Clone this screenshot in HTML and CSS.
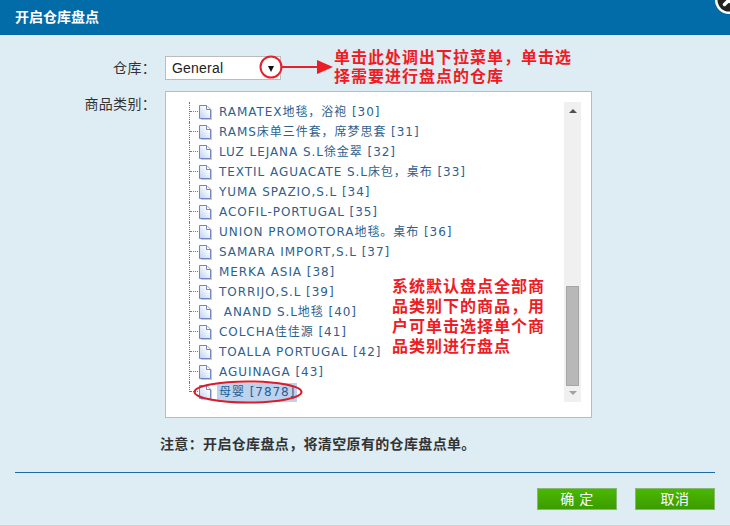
FILE: index.html
```html
<!DOCTYPE html>
<html lang="zh">
<head>
<meta charset="utf-8">
<title>开启仓库盘点</title>
<link rel="stylesheet" href="styles.css">
</head>
<body>
<svg class="defs" width="0" height="0">
  <defs>
    <linearGradient id="pg" x1="0" y1="1" x2="1" y2="0"><stop offset="0" stop-color="#b8d0f4"/><stop offset=".75" stop-color="#ffffff"/></linearGradient>
    <symbol id="doc" viewBox="0 0 14 16">
      <path d="M3 2H10L14 6V16H3Z" fill="#c8c8d0"/>
      <path d="M1.500 1.500H8.500L12.500 5.500V14.500H1.500Z" fill="url(#pg)" stroke="#7385c0"/>
      <path d="M8.500 1.500V5.500H12.500" fill="#fff" stroke="#7385c0"/>
    </symbol>
  </defs>
</svg>
<main class="dialog">
  <header class="title">开启仓库盘点</header>
  <section class="form">
    <div class="row row-select">
      <label class="label">仓库：</label>
      <div class="select"><span>General</span><i class="caret"></i></div>
    </div>
    <div class="row row-list">
      <label class="label">商品类别：</label>
      <div class="listbox">
        <ul class="tree">
          <li><svg class="doc"><use href="#doc"/></svg><span>RAMATEX地毯，浴袍 [30]</span></li>
          <li><svg class="doc"><use href="#doc"/></svg><span>RAMS床单三件套，席梦思套 [31]</span></li>
          <li><svg class="doc"><use href="#doc"/></svg><span>LUZ LEJANA S.L徐金翠 [32]</span></li>
          <li><svg class="doc"><use href="#doc"/></svg><span>TEXTIL AGUACATE S.L床包，桌布 [33]</span></li>
          <li><svg class="doc"><use href="#doc"/></svg><span>YUMA SPAZIO,S.L [34]</span></li>
          <li><svg class="doc"><use href="#doc"/></svg><span>ACOFIL-PORTUGAL [35]</span></li>
          <li><svg class="doc"><use href="#doc"/></svg><span>UNION PROMOTORA地毯。桌布 [36]</span></li>
          <li><svg class="doc"><use href="#doc"/></svg><span>SAMARA IMPORT,S.L [37]</span></li>
          <li><svg class="doc"><use href="#doc"/></svg><span>MERKA ASIA [38]</span></li>
          <li><svg class="doc"><use href="#doc"/></svg><span>TORRIJO,S.L [39]</span></li>
          <li><svg class="doc"><use href="#doc"/></svg><span class="pre"> ANAND S.L地毯 [40]</span></li>
          <li><svg class="doc"><use href="#doc"/></svg><span>COLCHA佳佳源 [41]</span></li>
          <li><svg class="doc"><use href="#doc"/></svg><span>TOALLA PORTUGAL [42]</span></li>
          <li><svg class="doc"><use href="#doc"/></svg><span>AGUINAGA [43]</span></li>
          <li class="last"><svg class="doc"><use href="#doc"/></svg><span class="selected">母婴 [7878]</span></li>
        </ul>
        <div class="scrollbar">
          <i class="arrow up"></i>
          <div class="track"><div class="thumb"></div></div>
          <i class="arrow down"></i>
        </div>
      </div>
    </div>
    <p class="note">注意：开启仓库盘点，将清空原有的仓库盘点单。</p>
  </section>
  <footer class="footer">
    <button class="btn">确 定</button>
    <button class="btn">取消</button>
  </footer>

  <div class="close" aria-label="关闭"><svg width="32" height="32" viewBox="0 0 32 32"><circle cx="16" cy="16" r="14" fill="#fff"/><circle cx="16" cy="16" r="11.500" fill="#222"/><path d="M11.500 11.500L20.500 20.500M20.500 11.500L11.500 20.500" stroke="#fff" stroke-width="3.500" stroke-linecap="round"/></svg></div>
  <svg class="mark-circle" width="26" height="26" viewBox="0 0 26 26"><circle cx="13" cy="13" r="10.500" fill="none" stroke="#e8202c" stroke-width="2"/></svg>
  <svg class="mark-arrow" width="52" height="16" viewBox="0 0 52 16"><path d="M0 8H36" stroke="#e8202c" stroke-width="2"/><path d="M36 1L52 8L36 15Z" fill="#ee1c25"/></svg>
  <p class="callout callout-top">单击此处调出下拉菜单，单击选<br>择需要进行盘点的仓库</p>
  <p class="callout callout-mid">系统默认盘点全部商<br>品类别下的商品，用<br>户可单击选择单个商<br>品类别进行盘点</p>
  <svg class="mark-ellipse" width="112" height="26" viewBox="0 0 112 26"><ellipse cx="56" cy="13" rx="53.500" ry="10.500" fill="none" stroke="#d81e2c" stroke-width="2"/></svg>
</main>
</body>
</html>
```

FILE: styles.css
```css
* { box-sizing: border-box; }
html, body { margin: 0; padding: 0; }
body { width: 730px; height: 526px; overflow: hidden; background: #deecf4; font-family: "Liberation Sans", "Noto Sans CJK SC", sans-serif; }
.defs { position: absolute; }
.dialog { position: relative; width: 730px; height: 526px; display: flex; flex-direction: column; border-bottom: 1px solid #d0d0d0; }
.title { height: 35px; flex: none; background: #026ca8; color: #fff; font-size: 14px; font-weight: 700; line-height: 34px; padding-left: 15px; }
.form { flex: 1; padding: 21px 0 0; display: flex; flex-direction: column; }
.row { display: flex; }
.label { width: 156px; text-align: right; font-size: 14px; color: #333; letter-spacing: .3px; line-height: 24px; margin-right: 9px; flex: none; }
.row-select { height: 24px; }
.row-list { margin-top: 11px; }
.row-list .label { line-height: 26px; }
.select { width: 116px; height: 24px; background: #fff; border: 1px solid #bbb; font-size: 14px; color: #222; padding-left: 6px; line-height: 22px; position: relative; letter-spacing: .2px; }
.caret { position: absolute; right: 6px; top: 9px; border: 3px solid transparent; border-top: 6px solid #111; border-bottom: 0; }
.listbox { width: 427px; height: 327px; background: #fff; border: 1px solid #bbb; display: flex; padding: 10px 10px 0 0; position: relative; }
.tree { list-style: none; margin: 0; padding: 0 0 0 23px; flex: 1; font-family: "DejaVu Sans", "Noto Sans CJK SC", sans-serif; font-size: 12px; color: #2e5f8e; letter-spacing: .95px; }
.tree li { height: 20px; display: flex; align-items: center; position: relative; padding-left: 9px; }
.tree li::before { content: ""; position: absolute; left: 0; top: 0; bottom: 0; border-left: 1px dotted #777; }
.tree li::after { content: ""; position: absolute; left: 1px; top: 9px; width: 8px; border-top: 1px dotted #777; }
.tree li.last::before { bottom: 10px; }
.doc { width: 14px; height: 16px; flex: none; margin-right: 7px; }
.tree span { white-space: pre; line-height: 15px; }
.tree .selected { background: #bdd2ec; color: #1f5f99; padding: 0 2px; margin-left: -2px; height: 19px; line-height: 19px; }
.scrollbar { width: 17px; height: 300px; background: #f0f0f0; flex: none; display: flex; flex-direction: column; align-items: center; }
.track { flex: 1; width: 100%; padding: 0 2px; display: flex; flex-direction: column; justify-content: flex-end; }
.thumb { height: 100px; background: #b8b8b8; border: 1px solid #a6a6a6; }
.arrow { flex: none; width: 0; height: 0; border: 4px solid transparent; }
.arrow.up { border-bottom: 4px solid #505050; border-top: 0; margin: 7px 0 6px; }
.arrow.down { border-top: 4px solid #a0a0a0; border-bottom: 0; margin: 5px 0 7px; }
.note { margin: 16px 0 0 160px; font-size: 14px; font-weight: 700; color: #333; line-height: 20px; letter-spacing: .35px; }
.footer { margin: 0 15px 15px; border-top: 1px solid #1f6aa5; height: 38px; padding-top: 15px; display: flex; justify-content: flex-end; gap: 18px; flex: none; }
.btn { width: 80px; height: 22px; padding: 0; background: linear-gradient(#4ab800, #3c9c00); border: 1px solid #85b972; color: #fff; font-family: inherit; font-size: 14px; line-height: 20px; letter-spacing: .5px; }
.close { position: absolute; right: -15px; top: -16px; width: 32px; height: 32px; }
.mark-circle { position: absolute; left: 258px; top: 54px; }
.mark-arrow { position: absolute; left: 281px; top: 59px; }
.mark-ellipse { position: absolute; left: 192px; top: 379px; }
.callout { position: absolute; margin: 0; color: #ee1c25; font-size: 16px; font-weight: 700; letter-spacing: 1px; }
.callout-top { left: 334px; top: 48px; line-height: 19px; }
.callout-mid { left: 392px; top: 277px; line-height: 20px; }
```
